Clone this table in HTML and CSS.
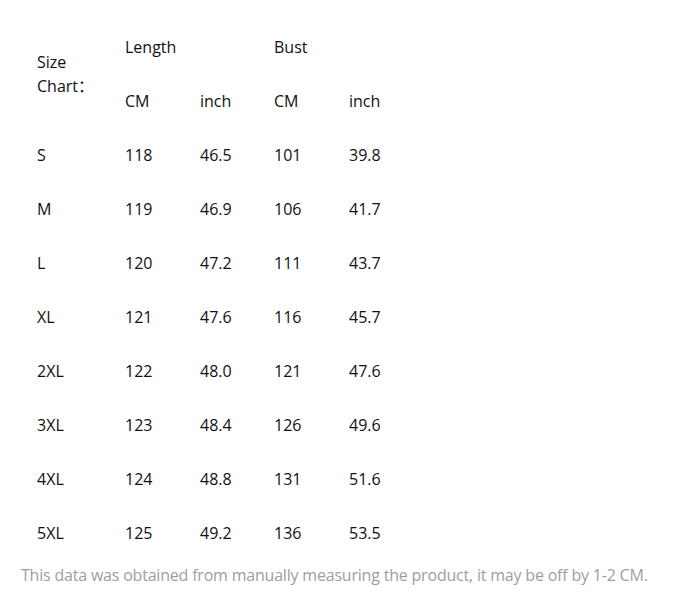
FILE: index.html
```html
<!DOCTYPE html>
<html>
<head>
<meta charset="utf-8">
<link rel="stylesheet" href="styles.css">
</head>
<body>
<div class="wrap">
<table class="chart">
<colgroup>
<col class="c1"><col class="c2"><col class="c3"><col class="c4"><col class="c5">
</colgroup>
<tr><td rowspan="2" class="lbl">Size<br>Chart：</td><td colspan="2">Length</td><td colspan="2">Bust</td></tr>
<tr><td>CM</td><td>inch</td><td>CM</td><td>inch</td></tr>
<tr><td>S</td><td>118</td><td>46.5</td><td>101</td><td>39.8</td></tr>
<tr><td>M</td><td>119</td><td>46.9</td><td>106</td><td>41.7</td></tr>
<tr><td>L</td><td>120</td><td>47.2</td><td>111</td><td>43.7</td></tr>
<tr><td>XL</td><td>121</td><td>47.6</td><td>116</td><td>45.7</td></tr>
<tr><td>2XL</td><td>122</td><td>48.0</td><td>121</td><td>47.6</td></tr>
<tr><td>3XL</td><td>123</td><td>48.4</td><td>126</td><td>49.6</td></tr>
<tr><td>4XL</td><td>124</td><td>48.8</td><td>131</td><td>51.6</td></tr>
<tr><td>5XL</td><td>125</td><td>49.2</td><td>136</td><td>53.5</td></tr>
</table>
<p class="note">This data was obtained from manually measuring the product, it may be off by 1-2 CM.</p>
</div>
</body>
</html>
```
FILE: styles.css
```css
html, body { margin: 0; padding: 0; background: #fff; }
body { font-family: "Open Sans", "Noto Sans CJK SC", sans-serif; color: #111; }
.wrap { padding: 20px 0 0 21px; }
.chart { border-collapse: collapse; table-layout: fixed; width: 392px; }
.chart .c1 { width: 88px; }
.chart .c2 { width: 75px; }
.chart .c3 { width: 74px; }
.chart .c4 { width: 75px; }
.chart .c5 { width: 80px; }
.chart td { height: 54px; padding: 0 0 0 16px; font-size: 16px; line-height: 24px; vertical-align: middle; white-space: nowrap; }
.note { margin: 4px 0 0; font-size: 16px; line-height: 22px; color: #9e9e9e; letter-spacing: -0.2px; }
```
